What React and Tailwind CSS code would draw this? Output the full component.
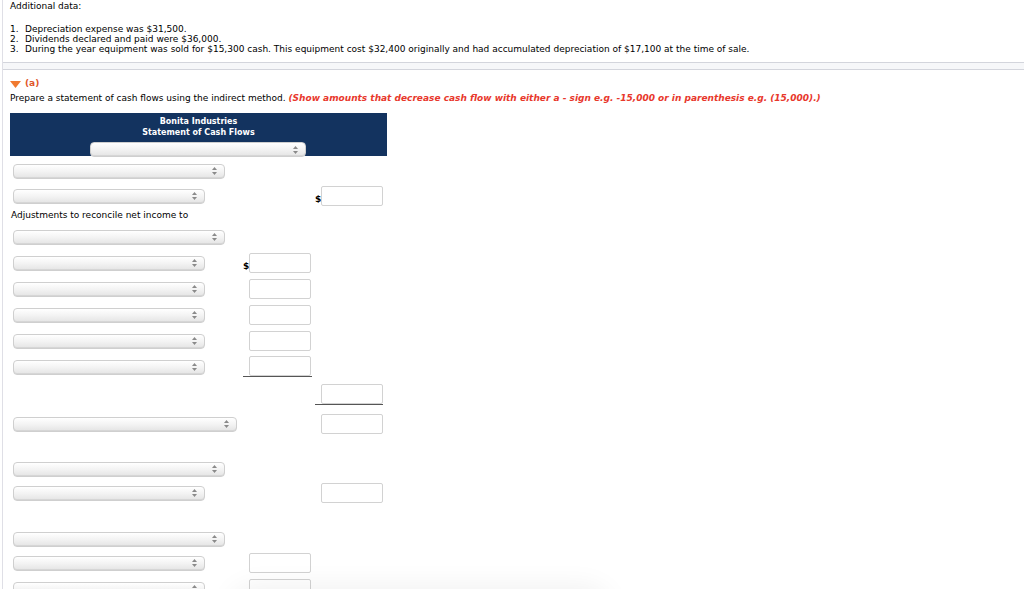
import React from 'react';

const Arrows = () => (
    <svg width="5" height="8" viewBox="0 0 5 8" className="shrink-0">
        <path d="M2.5 0 L5 3 L0 3 Z" fill="#8a8a8a" />
        <path d="M2.5 8 L5 5 L0 5 Z" fill="#8a8a8a" />
    </svg>
);

const Select = ({ width }) => (
    <div
        className="h-[15px] rounded-[4px] border border-[#cfcfcf] bg-linear-to-b from-white via-[#f3f3f3] to-[#e4e4e4] shadow-[inset_0_-1px_0_#d6d6d6] flex items-center justify-end pr-[7px]"
        style={{ width }}
    >
        <Arrows />
    </div>
);

const Input = () => (
    <div className="w-[62px] h-[20px] border border-[#d2d2d2] rounded-[2px] bg-white" />
);

// one line of the statement: select on the left, optional inputs in two money columns
const Row = ({ sel, mid, right, midDollar, rightDollar, midLine, rightLine, mt }) => (
    <div className="flex items-center h-[20px]" style={{ marginTop: mt }}>
        <div className="w-[242px] pl-[12px] flex items-center">
            {sel ? <Select width={sel} /> : null}
        </div>
        <div className={"w-[69px] h-[20px] flex items-end " + (midLine ? "border-b border-[#555]" : "")}>
            <span className="w-[6px] text-[9px] font-bold leading-[14px]">{midDollar ? "$" : ""}</span>
            {mid ? <Input /> : null}
        </div>
        <div className="w-[3px]" />
        <div className={"w-[68px] h-[20px] flex items-end " + (rightLine ? "border-b border-[#555]" : "")}>
            <span className="w-[6px] text-[9px] font-bold leading-[14px]">{rightDollar ? "$" : ""}</span>
            {right ? <Input /> : null}
        </div>
    </div>
);

export default function App() {
    return (
        <div className="relative w-[1024px] h-[589px] overflow-hidden bg-white text-black" style={{ fontFamily: '"DejaVu Sans", Verdana, sans-serif' }}>
            <div className="ml-[2px] border-l border-[#dfdfe6] h-full">
                <div className="pl-[7px] pt-[1px] text-[9px] leading-[10px]">
                    <div className="h-[11px]">Additional data:</div>
                    <ol className="mt-[12px]">
                        <li className="flex h-[10px]"><span className="w-[15px]">1.</span>Depreciation expense was $31,500.</li>
                        <li className="flex h-[10px]"><span className="w-[15px]">2.</span>Dividends declared and paid were $36,000.</li>
                        <li className="flex h-[10px]"><span className="w-[15px]">3.</span>During the year equipment was sold for $15,300 cash. This equipment cost $32,400 originally and had accumulated depreciation of $17,100 at the time of sale.</li>
                    </ol>
                </div>

                <div className="mt-[8px] h-[8px] border-t border-b border-[#d3d5dc] bg-[#f6f7f9]" />

                <div className="pl-[7px]">
                    <div className="mt-[8px] flex items-center gap-[4px] h-[12px]">
                        <svg width="11" height="7" viewBox="0 0 11 7"><path d="M0 0 L11 0 L5.5 7 Z" fill="#f07a30" /></svg>
                        <span className="text-[9px] font-bold text-[#e0562a]">(a)</span>
                    </div>
                    <div className="mt-[2px] text-[9px] leading-[12px] whitespace-nowrap">
                        Prepare a statement of cash flows using the indirect method.{' '}
                        <span className="font-bold italic text-[#e8382c]">(Show amounts that decrease cash flow with either a - sign e.g. -15,000 or in parenthesis e.g. (15,000).)</span>
                    </div>

                    <div className="mt-[9px] w-[377px] h-[43px] bg-[#13335f] flex flex-col items-center pt-[3px]">
                        <div className="text-white font-bold text-[8px] leading-[11px]">Bonita Industries</div>
                        <div className="text-white font-bold text-[8px] leading-[11px]">Statement of Cash Flows</div>
                        <div className="mt-[4px] -ml-[2px]"><Select width={216} /></div>
                    </div>
                </div>

                <div className="-ml-[2px]">
                    <Row mt="5px" sel={212} />
                    <Row mt="5px" sel={192} right rightDollar />
                    <div className="h-[20px] flex items-center pl-[10px] text-[9px]">Adjustments to reconcile net income to</div>
                    <Row mt="1px" sel={212} />
                    <Row mt="6px" sel={192} mid midDollar />
                    <Row mt="6px" sel={192} mid />
                    <Row mt="6px" sel={192} mid />
                    <Row mt="6px" sel={192} mid />
                    <Row mt="6px" sel={192} mid midLine />
                    <Row mt="8px" right rightLine />
                    <Row mt="9px" sel={224} right />
                    <Row mt="25px" sel={212} />
                    <Row mt="4px" sel={192} right />
                    <Row mt="26px" sel={212} />
                    <Row mt="4px" sel={192} mid />
                    <Row mt="6px" sel={192} mid />
                </div>
            </div>
            <div className="absolute left-[240px] top-[596px] w-[360px] h-[30px] rounded-[20px] shadow-[0_0_28px_10px_rgba(0,0,0,0.06)]" />
        </div>
    );
}
